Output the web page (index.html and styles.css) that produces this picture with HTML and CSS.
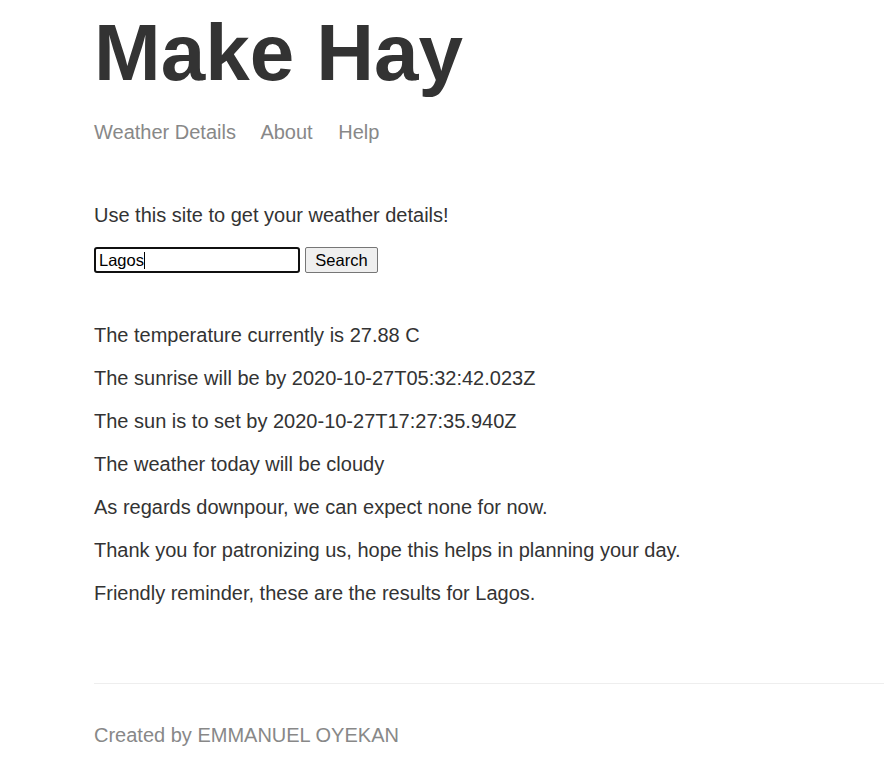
FILE: index.html
```html
<!DOCTYPE html>
<html>
<head>
<meta charset="utf-8">
<title>Weather</title>
<link rel="stylesheet" href="styles.css">
</head>
<body>
<div class="page">
  <header class="site-header">
    <h1 class="title">Make Hay</h1>
    <nav class="nav">
      <a href="#">Weather Details</a>
      <a href="#">About</a>
      <a href="#">Help</a>
    </nav>
  </header>
  <main class="main-content">
    <p class="intro">Use this site to get your weather details!</p>
    <form class="search-form">
      <input class="search-input" type="text" value="Lagos"><span class="caret"></span>
      <button class="search-btn" type="button">Search</button>
    </form>
    <div class="results">
      <p>The temperature currently is 27.88 C</p>
      <p>The sunrise will be by 2020-10-27T05:32:42.023Z</p>
      <p>The sun is to set by 2020-10-27T17:27:35.940Z</p>
      <p>The weather today will be cloudy</p>
      <p>As regards downpour, we can expect none for now.</p>
      <p>Thank you for patronizing us, hope this helps in planning your day.</p>
      <p>Friendly reminder, these are the results for Lagos.</p>
    </div>
  </main>
  <footer class="footer">
    <p>Created by EMMANUEL OYEKAN</p>
  </footer>
</div>
</body>
</html>
```
FILE: styles.css
```css
html, body {
  margin: 0;
  padding: 0;
  background: #fff;
}
body {
  font-family: "Liberation Sans", Arial, sans-serif;
  color: #333;
  font-size: 20px;
}
.page {
  padding-left: 94px;
  width: 812px;
  display: flex;
  flex-direction: column;
}
.site-header {
  padding-top: 7px;
  margin-bottom: 60px;
}
.title {
  font-size: 80px;
  font-weight: bold;
  margin: 0 0 22px 0;
  line-height: 92px;
}
.nav {
  line-height: 23px;
}
.nav a {
  color: #888;
  text-decoration: none;
  margin-right: 20px;
}
.intro {
  margin: 0 0 20px 0;
  line-height: 23px;
}
.search-form {
  display: flex;
  align-items: center;
  position: relative;
  height: 26px;
}
.search-input {
  box-sizing: border-box;
  width: 206px;
  height: 26px;
  border: 2px solid #101010;
  border-radius: 3px;
  padding: 0 3px;
  font-family: "Liberation Sans", Arial, sans-serif;
  font-size: 16.5px;
  color: #000;
  outline: none;
  margin: 0;
}
.caret {
  position: absolute;
  left: 50px;
  top: 5px;
  width: 1px;
  height: 17px;
  background: #000;
}
.search-btn {
  box-sizing: border-box;
  margin-left: 5px;
  width: 73px;
  height: 26px;
  background: #efefef;
  border: 1px solid #767676;
  border-radius: 2px;
  font-family: "Liberation Sans", Arial, sans-serif;
  font-size: 16.5px;
  color: #000;
  padding: 0;
}
.results {
  margin-top: 51px;
}
.results p {
  margin: 0 0 20px 0;
  line-height: 23px;
}
.footer {
  margin-top: 58px;
  border-top: 1px solid #eee;
  color: #888;
  padding-top: 40px;
}
.footer p {
  margin: 0;
  line-height: 23px;
}
```
